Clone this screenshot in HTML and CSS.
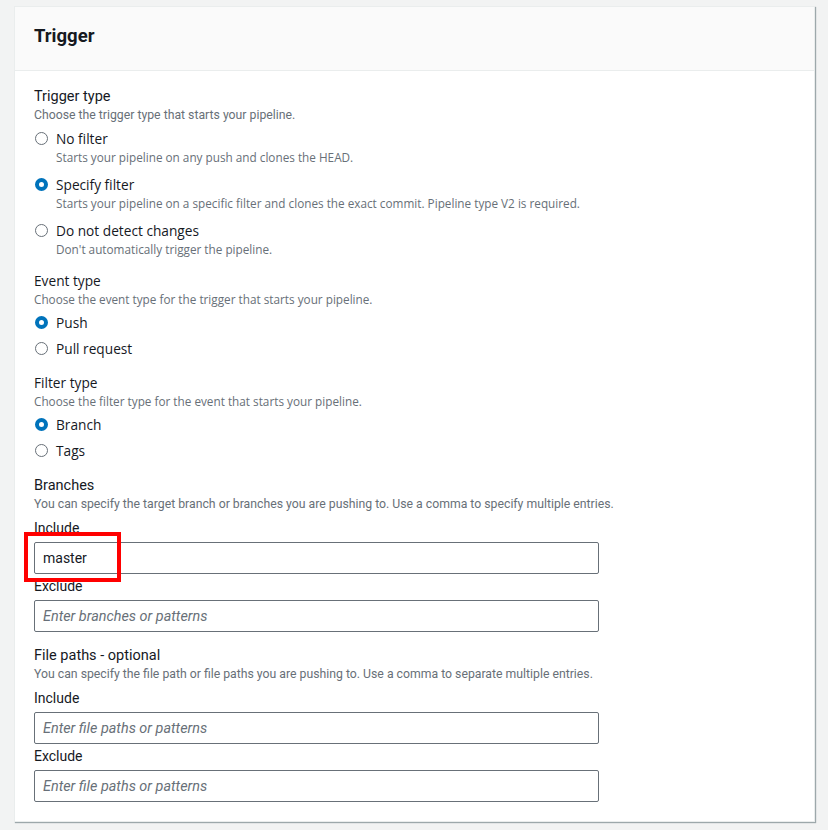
FILE: index.html
```html
<!DOCTYPE html>
<html lang="en">
<head>
    <meta charset="UTF-8">
    <meta name="viewport" content="width=device-width, initial-scale=1.0">
    <title>Trigger</title>
    <link rel="stylesheet" href="styles.css">
</head>
<body>

<div class="container">
    <div class="panel">
        <div class="panel-header">
            <h2>Trigger</h2>
        </div>
        <div class="panel-body">

            <div class="field">
                <div class="label first">Trigger type</div>
                <div class="desc">Choose the trigger type that starts your pipeline.</div>
                <div class="radio-group">
                    <div class="radio">
                        <span class="dot"></span>
                        <div>
                            <div class="radio-label">No filter</div>
                            <div class="radio-desc">Starts your pipeline on any push and clones the HEAD.</div>
                        </div>
                    </div>
                    <div class="radio">
                        <span class="dot checked"></span>
                        <div>
                            <div class="radio-label">Specify filter</div>
                            <div class="radio-desc">Starts your pipeline on a specific filter and clones the exact commit. Pipeline type V2 is required.</div>
                        </div>
                    </div>
                    <div class="radio">
                        <span class="dot"></span>
                        <div>
                            <div class="radio-label">Do not detect changes</div>
                            <div class="radio-desc">Don't automatically trigger the pipeline.</div>
                        </div>
                    </div>
                </div>
            </div>

            <div class="field">
                <div class="label alt">Event type</div>
                <div class="desc alt">Choose the event type for the trigger that starts your pipeline.</div>
                <div class="radio-group tight">
                    <div class="radio"><span class="dot checked"></span><div class="radio-label">Push</div></div>
                    <div class="radio"><span class="dot"></span><div class="radio-label">Pull request</div></div>
                </div>
            </div>

            <div class="field">
                <div class="label alt">Filter type</div>
                <div class="desc alt">Choose the filter type for the event that starts your pipeline.</div>
                <div class="radio-group tight">
                    <div class="radio"><span class="dot checked"></span><div class="radio-label">Branch</div></div>
                    <div class="radio"><span class="dot"></span><div class="radio-label">Tags</div></div>
                </div>
            </div>

            <div class="field branches">
                <div class="label">Branches</div>
                <div class="desc">You can specify the target branch or branches you are pushing to. Use a comma to specify multiple entries.</div>
                <div class="sub-label">Include</div>
                <div class="input-wrap">
                    <input class="text-input" type="text" value="master">
                    <span class="highlight"></span>
                </div>
                <div class="sub-label under"><span>Exclude</span></div>
                <input class="text-input" type="text" placeholder="Enter branches or patterns">
            </div>

            <div class="field">
                <div class="label">File paths - optional</div>
                <div class="desc">You can specify the file path or file paths you are pushing to. Use a comma to separate multiple entries.</div>
                <div class="sub-label">Include</div>
                <input class="text-input" type="text" placeholder="Enter file paths or patterns">
                <div class="sub-label next">Exclude</div>
                <input class="text-input" type="text" placeholder="Enter file paths or patterns">
            </div>

        </div>
    </div>
</div>

</body>
</html>
```

FILE: styles.css
```css
body {
    font-family: Roboto, "Liberation Sans", sans-serif;
    font-size: 14px;
    margin: 0;
    padding: 0;
    background-color: #f2f3f3;
    color: #16191f;
}
.container {
    padding: 6px 13px 8px 14px;
}
.panel {
    background: white;
    border: 1px solid #eaeded;
    box-shadow: 1px 1px 1px 0 rgba(0,28,36,0.35);
}
.panel-header {
    background-color: #fafafa;
    border-bottom: 1px solid #eaeded;
    height: 63px;
    padding: 0 19px;
    display: flex;
    align-items: center;
}
.panel-header h2 {
    margin: 0;
    font-size: 18.5px;
    font-weight: 700;
    line-height: 22px;
    position: relative;
    top: -3px;
}
.panel-body {
    padding: 16px 19px 19px;
}
.field {
    margin-bottom: 14px;
}
.field:last-child {
    margin-bottom: 0;
}
.field.branches {
    padding-top: 1px;
}
.label {
    font-size: 14.5px;
    line-height: 20px;
}
.desc {
    font-size: 12.25px;
    line-height: 16px;
    color: #687078;
}
.label.alt, .radio-label {
    font-family: "Open Sans", "DejaVu Sans", sans-serif;
    font-size: 13.7px;
}
.desc.alt, .radio-desc {
    font-family: "Open Sans", "DejaVu Sans", sans-serif;
    font-size: 11.75px;
    line-height: 16px;
    color: #687078;
}
.radio-group {
    margin-top: 6px;
    display: flex;
    flex-direction: column;
    gap: 10px;
}
.radio-group.tight {
    gap: 6px;
}
.radio {
    display: flex;
    align-items: flex-start;
    gap: 8px;
}
.radio-label {
    line-height: 20px;
}
.dot {
    flex: none;
    width: 13px;
    height: 13px;
    margin: 3px 0 0 1px;
    border: 1px solid #687078;
    border-radius: 50%;
    box-sizing: border-box;
}
.dot.checked {
    border: 4px solid #0073bb;
    background: white;
}
.sub-label {
    margin-top: 6px;
    margin-bottom: 4px;
    line-height: 20px;
}
.sub-label.next {
    margin-top: 2px;
}
.sub-label.under {
    margin-top: 8px;
    height: 14px;
    overflow: hidden;
    line-height: 8px;
}
.input-wrap {
    position: relative;
}
.text-input {
    display: block;
    box-sizing: border-box;
    width: 565px;
    height: 32px;
    padding: 0 8px;
    border: 1px solid #687078;
    border-radius: 2px;
    font-family: Roboto, "Liberation Sans", sans-serif;
    font-size: 14px;
    color: #16191f;
    background: white;
}
.text-input::placeholder {
    color: #687078;
    font-style: italic;
    font-size: 14.4px;
}
.highlight {
    position: absolute;
    left: -10px;
    top: -10px;
    width: 89px;
    height: 42px;
    border: 4px solid #ff0000;
}
```
